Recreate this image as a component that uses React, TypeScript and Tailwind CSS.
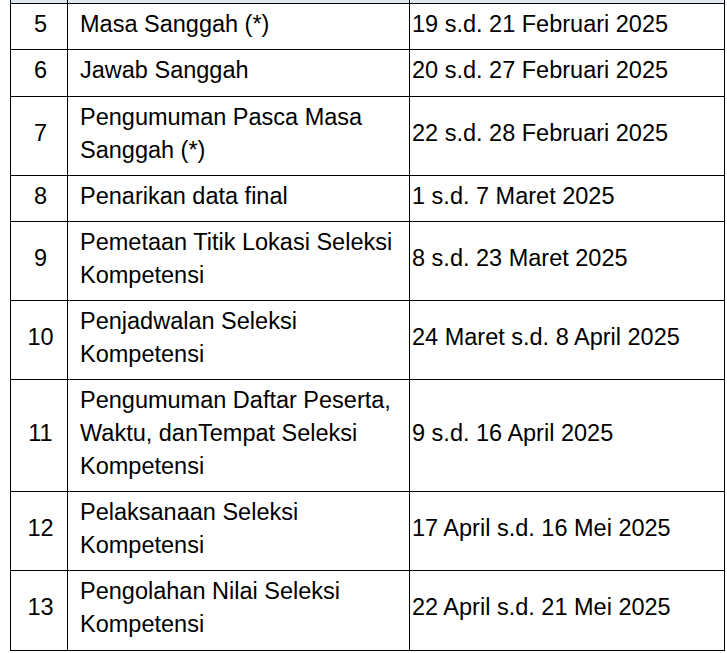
import React from "react";

const rows: { no: string; act: string[]; date: string; extra?: boolean }[] = [
  { no: "5", act: ["Masa Sanggah (*)"], date: "19 s.d. 21 Februari 2025" },
  { no: "6", act: ["Jawab Sanggah"], date: "20 s.d. 27 Februari 2025", extra: true },
  { no: "7", act: ["Pengumuman Pasca Masa", "Sanggah (*)"], date: "22 s.d. 28 Februari 2025" },
  { no: "8", act: ["Penarikan data final"], date: "1 s.d. 7 Maret 2025" },
  { no: "9", act: ["Pemetaan Titik Lokasi Seleksi", "Kompetensi"], date: "8 s.d. 23 Maret 2025" },
  { no: "10", act: ["Penjadwalan Seleksi", "Kompetensi"], date: "24 Maret s.d. 8 April 2025" },
  { no: "11", act: ["Pengumuman Daftar Peserta,", "Waktu, danTempat Seleksi", "Kompetensi"], date: "9 s.d. 16 April 2025" },
  { no: "12", act: ["Pelaksanaan Seleksi", "Kompetensi"], date: "17 April s.d. 16 Mei 2025" },
  { no: "13", act: ["Pengolahan Nilai Seleksi", "Kompetensi"], date: "22 April s.d. 21 Mei 2025", extra: true },
];

export default function App() {
  return (
    <div className="w-[727px] h-[653px] bg-white overflow-hidden" style={{ fontFamily: '"Liberation Sans", Arial, sans-serif' }}>
      <table className="ml-[10px] border-collapse text-[23.5px] leading-[33px] text-black">
        <colgroup>
          <col className="w-[57px]" />
          <col className="w-[342px]" />
          <col className="w-[315px]" />
        </colgroup>
        <tbody>
          <tr className="h-[3px] bg-[#dfe7f1]">
            <td className="border-x border-b border-black p-0"></td>
            <td className="border-x border-b border-black p-0"></td>
            <td className="border-x border-b border-black p-0"></td>
          </tr>
          {rows.map((r) => (
            <tr key={r.no}>
              <td className={`border border-black text-center align-middle pt-[4px] pl-[3px] pr-0 ${r.extra ? "pb-[9px]" : "pb-[8px]"}`}>{r.no}</td>
              <td className={`border border-black align-middle pt-[4px] pl-[12px] pr-0 whitespace-nowrap ${r.extra ? "pb-[9px]" : "pb-[8px]"}`}>
                {r.act.map((l, i) => (
                  <div key={i}>{l}</div>
                ))}
              </td>
              <td className={`border border-black align-middle pt-[4px] pl-[2px] pr-0 whitespace-nowrap ${r.extra ? "pb-[9px]" : "pb-[8px]"}`}>{r.date}</td>
            </tr>
          ))}
        </tbody>
      </table>
    </div>
  );
}
